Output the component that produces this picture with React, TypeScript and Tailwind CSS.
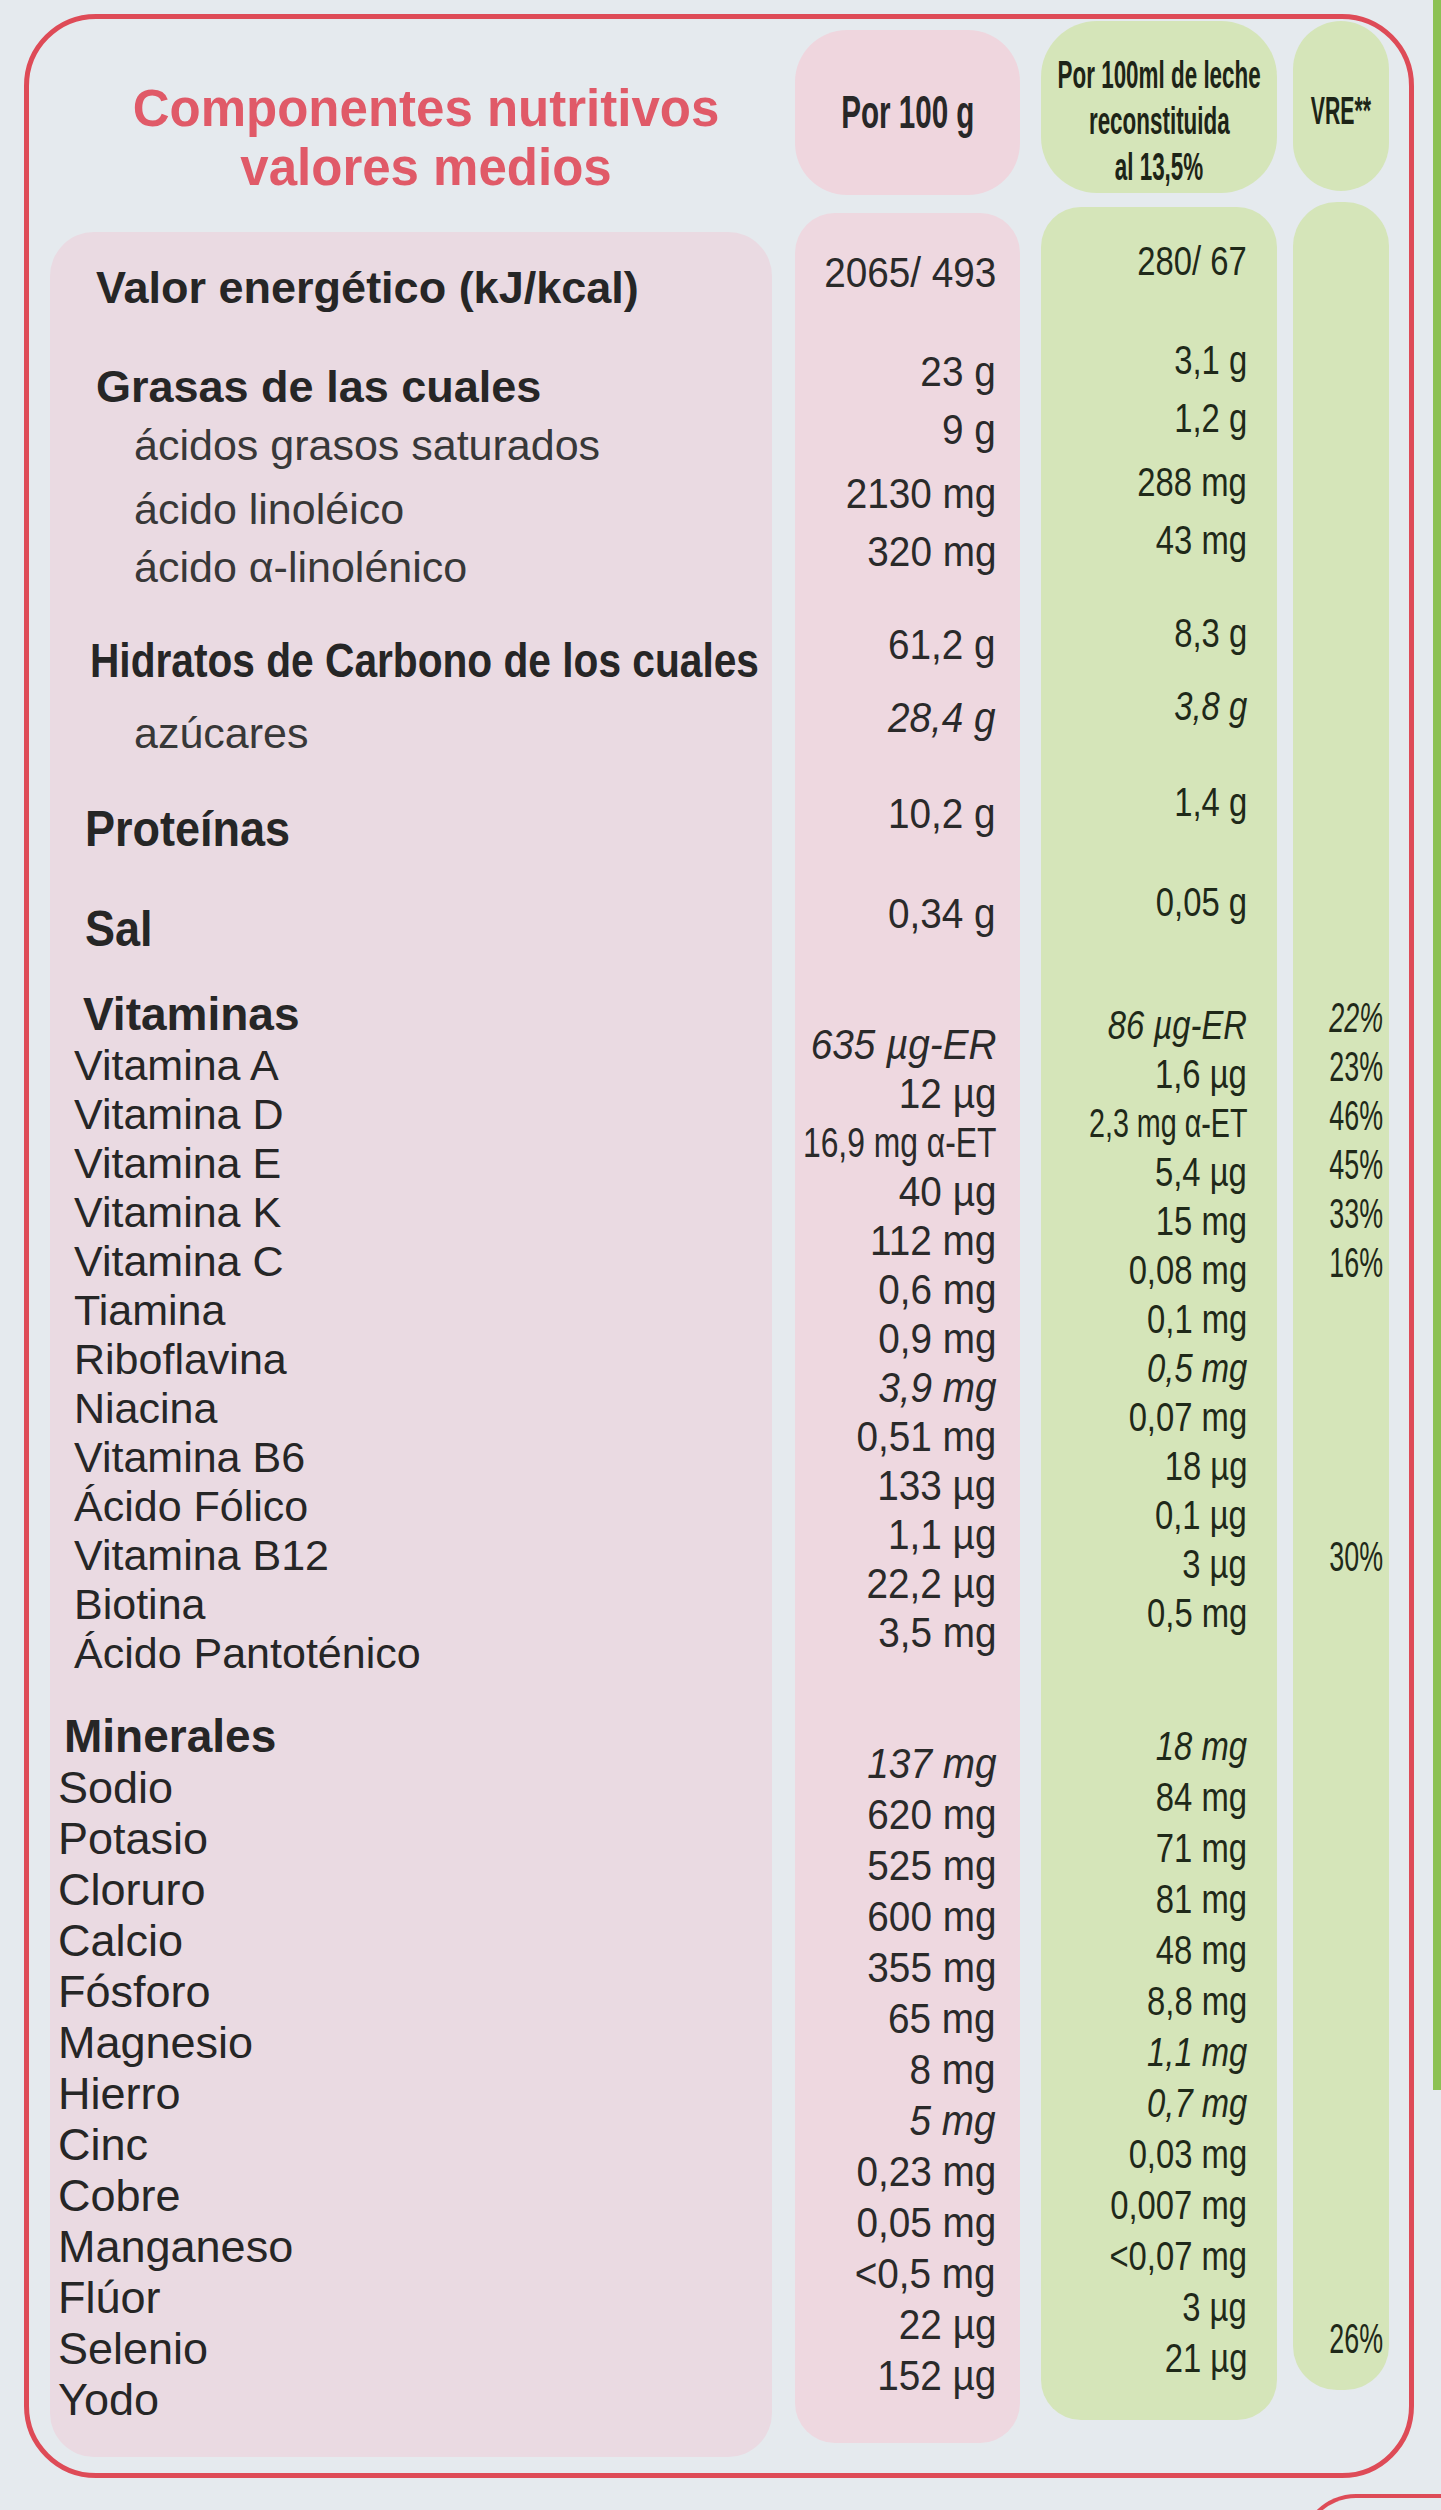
import React from 'react';

type Kind = 'wide' | 'sub' | 'cond' | 'head' | 'name';

interface Row {
    label: string;
    kind: Kind;
    h: string;
    a?: string;
    b?: string;
    c?: string;
    ia?: boolean;
    ib?: boolean;
    ic?: boolean;
    sq?: boolean; // long value, squeezed harder
}

// first block: slot heights are the distance between row centres
const topRows: Row[] = [
    { label: 'Valor energético (kJ/kcal)', kind: 'wide', h: 'h-[48px]', a: '2065/ 493', b: '280/ 67' },
    { label: 'Grasas de las cuales', kind: 'wide', h: 'h-[99px]', a: '23 g', b: '3,1 g' },
    { label: 'ácidos grasos saturados', kind: 'sub', h: 'h-[58px]', a: '9 g', b: '1,2 g' },
    { label: 'ácido linoléico', kind: 'sub', h: 'h-[64px]', a: '2130 mg', b: '288 mg' },
    { label: 'ácido α-linolénico', kind: 'sub', h: 'h-[58px]', a: '320 mg', b: '43 mg' },
    { label: 'Hidratos de Carbono de los cuales', kind: 'cond', h: 'h-[93px]', a: '61,2 g', b: '8,3 g' },
    { label: 'azúcares', kind: 'sub', h: 'h-[73px]', a: '28,4 g', b: '3,8 g', ia: true, ib: true },
    { label: 'Proteínas', kind: 'head', h: 'h-[96px]', a: '10,2 g', b: '1,4 g' },
    { label: 'Sal', kind: 'head', h: 'h-[100px]', a: '0,34 g', b: '0,05 g' },
];

const vitamins: Row[] = [
    { label: 'Vitamina A', kind: 'name', h: 'h-[49px]', a: '635 µg-ER', b: '86 µg-ER', c: '22%', ia: true, ib: true, ic: true },
    { label: 'Vitamina D', kind: 'name', h: 'h-[49px]', a: '12 µg', b: '1,6 µg', c: '23%' },
    { label: 'Vitamina E', kind: 'name', h: 'h-[49px]', a: '16,9 mg α-ET', b: '2,3 mg α-ET', c: '46%', sq: true },
    { label: 'Vitamina K', kind: 'name', h: 'h-[49px]', a: '40 µg', b: '5,4 µg', c: '45%' },
    { label: 'Vitamina C', kind: 'name', h: 'h-[49px]', a: '112 mg', b: '15 mg', c: '33%' },
    { label: 'Tiamina', kind: 'name', h: 'h-[49px]', a: '0,6 mg', b: '0,08 mg', c: '16%' },
    { label: 'Riboflavina', kind: 'name', h: 'h-[49px]', a: '0,9 mg', b: '0,1 mg' },
    { label: 'Niacina', kind: 'name', h: 'h-[49px]', a: '3,9 mg', b: '0,5 mg', ia: true, ib: true },
    { label: 'Vitamina B6', kind: 'name', h: 'h-[49px]', a: '0,51 mg', b: '0,07 mg' },
    { label: 'Ácido Fólico', kind: 'name', h: 'h-[49px]', a: '133 µg', b: '18 µg' },
    { label: 'Vitamina B12', kind: 'name', h: 'h-[49px]', a: '1,1 µg', b: '0,1 µg' },
    { label: 'Biotina', kind: 'name', h: 'h-[49px]', a: '22,2 µg', b: '3 µg', c: '30%' },
    { label: 'Ácido Pantoténico', kind: 'name', h: 'h-[49px]', a: '3,5 mg', b: '0,5 mg' },
];

const minerals: Row[] = [
    { label: 'Sodio', kind: 'name', h: 'h-[51px]', a: '137 mg', b: '18 mg', ia: true, ib: true },
    { label: 'Potasio', kind: 'name', h: 'h-[51px]', a: '620 mg', b: '84 mg' },
    { label: 'Cloruro', kind: 'name', h: 'h-[51px]', a: '525 mg', b: '71 mg' },
    { label: 'Calcio', kind: 'name', h: 'h-[51px]', a: '600 mg', b: '81 mg' },
    { label: 'Fósforo', kind: 'name', h: 'h-[51px]', a: '355 mg', b: '48 mg' },
    { label: 'Magnesio', kind: 'name', h: 'h-[51px]', a: '65 mg', b: '8,8 mg' },
    { label: 'Hierro', kind: 'name', h: 'h-[51px]', a: '8 mg', b: '1,1 mg', ib: true },
    { label: 'Cinc', kind: 'name', h: 'h-[51px]', a: '5 mg', b: '0,7 mg', ia: true, ib: true },
    { label: 'Cobre', kind: 'name', h: 'h-[51px]', a: '0,23 mg', b: '0,03 mg' },
    { label: 'Manganeso', kind: 'name', h: 'h-[51px]', a: '0,05 mg', b: '0,007 mg' },
    { label: 'Flúor', kind: 'name', h: 'h-[51px]', a: '<0,5 mg', b: '<0,07 mg' },
    { label: 'Selenio', kind: 'name', h: 'h-[51px]', a: '22 µg', b: '3 µg' },
    { label: 'Yodo', kind: 'name', h: 'h-[51px]', a: '152 µg', b: '21 µg', c: '26%' },
];

// a row slot: the 48px line sits at the bottom of the slot
const Slot: React.FC<{ h: string; className?: string; children?: React.ReactNode }> = ({ h, className = '', children }) => (
    <div className={`flex items-end ${h}`}>
        <div className={`flex h-[48px] w-full items-center whitespace-nowrap leading-[48px] ${className}`}>{children}</div>
    </div>
);

const LabelPanel: React.FC = () => (
    <div className="mb-[16px] flex-1 rounded-[44px] bg-[#eadae2] pt-[32px] text-[#262626]">
        {topRows.map((r, i) => {
            const h = i === 0 ? 'h-[48px]' : r.h;
            if (r.kind === 'wide') {
                return <Slot key={r.label} h={h} className="pl-[46px] text-[45px] font-bold">{r.label}</Slot>;
            }
            if (r.kind === 'sub') {
                return <Slot key={r.label} h={h} className="pl-[84px] text-[43px] text-[#383838]">{r.label}</Slot>;
            }
            if (r.kind === 'cond') {
                return (
                    <Slot key={r.label} h={h} className="pl-[40px]">
                        <span className="inline-block shrink-0 origin-left scale-x-[0.83] text-[49px] font-bold">{r.label}</span>
                    </Slot>
                );
            }
            return (
                <Slot key={r.label} h={h} className="pl-[35px]">
                    <span className="inline-block shrink-0 origin-left scale-x-[0.9] text-[50px] font-bold">{r.label}</span>
                </Slot>
            );
        })}
        <Slot h="h-[85px]" className="pl-[33px] text-[46px] font-bold">Vitaminas</Slot>
        {vitamins.map((r, i) => (
            <Slot key={r.label} h={i === 0 ? 'h-[51px]' : r.h} className="pl-[24px] text-[43px]">
                {r.label}
            </Slot>
        ))}
        <Slot h="h-[83px]" className="pl-[14px] text-[46px] font-bold">Minerales</Slot>
        {minerals.map((r, i) => (
            <Slot key={r.label} h={i === 0 ? 'h-[52px]' : r.h} className="pl-[8px] text-[45px]">
                {r.label}
            </Slot>
        ))}
    </div>
);

interface ValueColumnProps {
    panel: string;
    vitFirst: string;
    minFirst: string;
    text: string;
    squeeze: string;
    squeezeMore: string;
    pick: (r: Row) => { v?: string; it?: boolean; sq?: boolean };
}

const ValueColumn: React.FC<ValueColumnProps> = ({ panel, vitFirst, minFirst, text, squeeze, squeezeMore, pick }) => {
    const cell = (r: Row, h: string, key: string) => {
        const { v, it, sq } = pick(r);
        return (
            <Slot key={key} h={h} className="justify-end">
                {v && (
                    <span className={`inline-block shrink-0 origin-right ${sq ? squeezeMore : squeeze} ${text} ${it ? 'italic' : ''}`}>
                        {v}
                    </span>
                )}
            </Slot>
        );
    };
    return (
        <div className={panel}>
            {topRows.map((r, i) => cell(r, i === 0 ? 'h-[48px]' : r.h, `t${i}`))}
            {vitamins.map((r, i) => cell(r, i === 0 ? vitFirst : r.h, `v${i}`))}
            {minerals.map((r, i) => cell(r, i === 0 ? minFirst : r.h, `m${i}`))}
        </div>
    );
};

export default function App() {
    return (
        <div className="relative h-[2510px] w-[1441px] overflow-hidden bg-[#e5eaee] font-['Liberation_Sans',Arial,sans-serif] text-[#282828]">
            {/* green side of the pack beyond the frame */}
            <div className="absolute right-0 top-0 h-[2090px] w-[8px] bg-[#8cc153]" />
            {/* top of the next box */}
            <div className="absolute left-[1300px] top-[2494px] h-[60px] w-[200px] rounded-tl-[56px] border-l-[4px] border-t-[4px] border-[#de4b57]" />

            <div className="ml-[24px] mt-[14px] flex h-[2464px] w-[1390px] rounded-[72px] border-[5px] border-[#de4b57] pl-[21px]">
                {/* labels */}
                <div className="flex w-[722px] flex-col">
                    <div className="h-[213px] pl-[30px] pt-[60px] text-center text-[51px] font-bold leading-[59px] text-[#e05a68]">
                        <div>Componentes nutritivos</div>
                        <div>valores medios</div>
                    </div>
                    <LabelPanel />
                </div>

                {/* per 100 g */}
                <div className="ml-[23px] flex w-[225px] flex-col pt-[11px]">
                    <div className="flex h-[165px] items-center justify-center rounded-[52px] bg-[#efd6de]">
                        <span className="inline-block shrink-0 scale-x-[0.63] whitespace-nowrap text-[47px] font-bold">Por 100 g</span>
                    </div>
                    <ValueColumn
                        panel="mb-[30px] mt-[18px] flex-1 rounded-[40px] bg-[#eed8e0] pr-[24px] pt-[35px]"
                        vitFirst="h-[131px]"
                        minFirst="h-[131px]"
                        text="text-[43px] text-[#2a2a2a]"
                        squeeze="scale-x-[0.9]"
                        squeezeMore="scale-x-[0.74]"
                        pick={(r) => ({ v: r.a, it: r.ia, sq: r.sq })}
                    />
                </div>

                {/* per 100 ml */}
                <div className="ml-[21px] flex w-[236px] flex-col pt-[2px]">
                    <div className="flex h-[172px] flex-col items-center rounded-[56px] bg-[#d5e5b9] pt-[31px] text-[38px] font-bold leading-[46px] text-[#1d2417]">
                        <span className="inline-block shrink-0 scale-x-[0.59] whitespace-nowrap">Por 100ml de leche</span>
                        <span className="inline-block shrink-0 scale-x-[0.59] whitespace-nowrap">reconstituida</span>
                        <span className="inline-block shrink-0 scale-x-[0.59] whitespace-nowrap">al 13,5%</span>
                    </div>
                    <ValueColumn
                        panel="mb-[53px] mt-[14px] flex-1 rounded-[40px] bg-[#d5e5b9] pr-[30px] pt-[30px]"
                        vitFirst="h-[123px]"
                        minFirst="h-[133px]"
                        text="text-[41px] text-[#1f2919]"
                        squeeze="scale-x-[0.8]"
                        squeezeMore="scale-x-[0.7]"
                        pick={(r) => ({ v: r.b, it: r.ib, sq: r.sq })}
                    />
                </div>

                {/* VRE */}
                <div className="ml-[16px] flex w-[96px] flex-col pt-[2px]">
                    <div className="flex h-[170px] justify-center rounded-[48px] bg-[#d5e5b9] pt-[70px]">
                        <span className="inline-block h-[40px] shrink-0 scale-x-[0.56] whitespace-nowrap text-[38px] font-bold leading-[40px] text-[#1d2417]">VRE**</span>
                    </div>
                    <ValueColumn
                        panel="mb-[83px] mt-[11px] flex-1 rounded-[44px] bg-[#d5e5b9] pr-[6px] pt-[30px]"
                        vitFirst="h-[121px]"
                        minFirst="h-[121px]"
                        text="text-[42px] text-[#1f2919]"
                        squeeze="scale-x-[0.64]"
                        squeezeMore="scale-x-[0.64]"
                        pick={(r) => ({ v: r.c, it: r.ic })}
                    />
                </div>
            </div>
        </div>
    );
}
